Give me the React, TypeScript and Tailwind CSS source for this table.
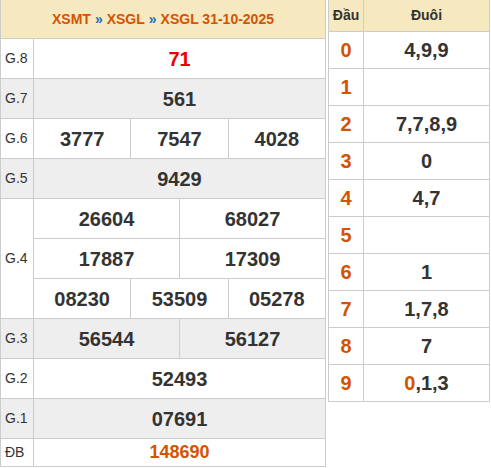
const font = { fontFamily: '"Liberation Sans", Arial, sans-serif' };

type Row = { label: string; groups: string[][]; gray: boolean };

const rows: Row[] = [
  { label: "G.8", groups: [["71"]], gray: false },
  { label: "G.7", groups: [["561"]], gray: true },
  { label: "G.6", groups: [["3777", "7547", "4028"]], gray: false },
  { label: "G.5", groups: [["9429"]], gray: true },
  { label: "G.4", groups: [["26604", "68027"], ["17887", "17309"], ["08230", "53509", "05278"]], gray: false },
  { label: "G.3", groups: [["56544", "56127"]], gray: true },
  { label: "G.2", groups: [["52493"]], gray: false },
  { label: "G.1", groups: [["07691"]], gray: true },
];

const loto = [
  { head: "0", tail: "4,9,9" },
  { head: "1", tail: "" },
  { head: "2", tail: "7,7,8,9" },
  { head: "3", tail: "0" },
  { head: "4", tail: "4,7" },
  { head: "5", tail: "" },
  { head: "6", tail: "1" },
  { head: "7", tail: "1,7,8" },
  { head: "8", tail: "7" },
];

const PrizeRow = ({ row }: { row: Row }) => (
  <div className={`flex border-b border-[#cccccc] ${row.gray ? "bg-[#eeeeee]" : "bg-white"}`}>
    <div className="w-[33px] shrink-0 border-r border-[#cccccc] flex items-center pl-[4px] text-[14px] text-[#333]">
      {row.label}
    </div>
    <div className="flex-1 flex flex-col">
      {row.groups.map((g, gi) => (
        <div
          key={gi}
          className={`flex ${gi < row.groups.length - 1 ? "h-[40px] border-b border-[#cccccc]" : "h-[39px]"}`}
        >
          {g.map((n, i) => (
            <div
              key={i}
              className={`flex-1 flex items-center justify-center text-[20px] font-bold ${
                row.label === "G.8" ? "text-[#ee0000]" : "text-[#333333]"
              } ${i < g.length - 1 ? "border-r border-[#cccccc]" : ""}`}
            >
              {n}
            </div>
          ))}
        </div>
      ))}
    </div>
  </div>
);

export default function App() {
  return (
    <div className="flex items-start gap-[2px] bg-white w-[491px] h-[468px]" style={font}>
      <div className="w-[326px] border-l border-r border-[#cccccc]">
        <div className="h-[39px] bg-[#f6e9c0] border-b border-[#cccccc] flex items-center justify-center text-[14px] font-bold text-[#d35400]">
          XSMT <span className="text-[#1e6fb8] mx-[4px]">»</span> XSGL <span className="text-[#1e6fb8] mx-[4px]">»</span> XSGL 31-10-2025
        </div>
        {rows.map((r) => (
          <PrizeRow key={r.label} row={r} />
        ))}
        <div className="flex h-[28px] border-b border-[#cccccc] bg-white">
          <div className="w-[33px] shrink-0 border-r border-[#cccccc] flex items-center pl-[4px] text-[14px] text-[#333]">
            ĐB
          </div>
          <div className="flex-1 flex items-center justify-center text-[18px] font-bold text-[#d35400]">
            148690
          </div>
        </div>
      </div>

      <div className="w-[162px] border-l border-r border-[#cccccc]">
        <div className="flex h-[32px] bg-[#f6e9c0] border-b border-[#cccccc] text-[14px] font-bold text-[#333333]">
          <div className="w-[35px] border-r border-[#cccccc] flex items-center justify-center">Đầu</div>
          <div className="flex-1 flex items-center justify-center">Đuôi</div>
        </div>
        {loto.map((l) => (
          <div key={l.head} className="flex h-[37px] border-b border-[#cccccc] text-[20px] font-bold">
            <div className="w-[35px] border-r border-[#cccccc] flex items-center justify-center text-[#d35400]">
              {l.head}
            </div>
            <div className="flex-1 flex items-center justify-center text-[#333333]">{l.tail}</div>
          </div>
        ))}
        <div className="flex h-[37px] border-b border-[#cccccc] text-[20px] font-bold">
          <div className="w-[35px] border-r border-[#cccccc] flex items-center justify-center text-[#d35400]">9</div>
          <div className="flex-1 flex items-center justify-center text-[#333333]">
            <span className="text-[#d35400]">0</span>,1,3
          </div>
        </div>
      </div>
    </div>
  );
}
